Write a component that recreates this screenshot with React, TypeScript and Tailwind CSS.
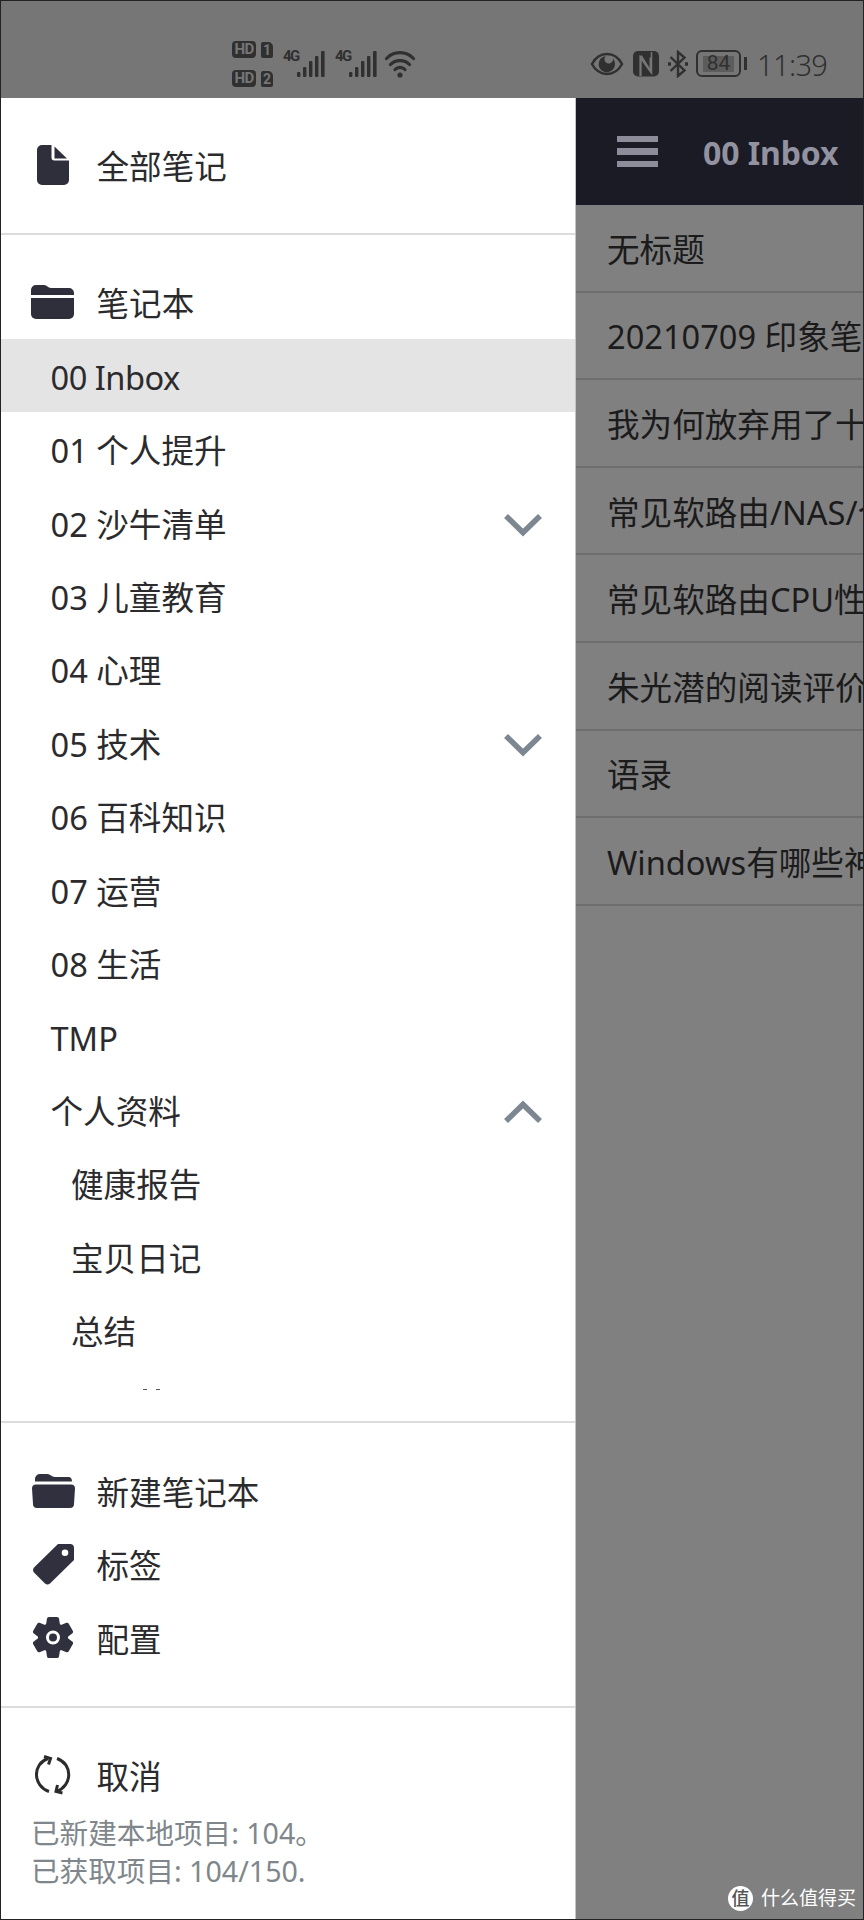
import React from "react";

type Notebook = { name: string; indent?: boolean; chevron?: "up" | "down"; active?: boolean };

const notebooks: Notebook[] = [
  { name: "00 Inbox", active: true },
  { name: "01 个人提升" },
  { name: "02 沙牛清单", chevron: "down" },
  { name: "03 儿童教育" },
  { name: "04 心理" },
  { name: "05 技术", chevron: "down" },
  { name: "06 百科知识" },
  { name: "07 运营" },
  { name: "08 生活" },
  { name: "TMP" },
  { name: "个人资料", chevron: "up" },
  { name: "健康报告", indent: true },
  { name: "宝贝日记", indent: true },
  { name: "总结", indent: true },
];

const notes = [
  "无标题",
  "20210709 印象笔记",
  "我为何放弃用了十年",
  "常见软路由/NAS/个人",
  "常见软路由CPU性能",
  "朱光潜的阅读评价",
  "语录",
  "Windows有哪些神器",
];

function Chevron({ up }: { up?: boolean }) {
  return (
    <svg width="38" height="24" viewBox="0 0 38 24" className={up ? "mr-[33px]" : "mr-[33px] rotate-180"}>
      <path d="M2 21 19 4.5 36 21" fill="none" stroke="#7d8791" strokeWidth="5.6" />
    </svg>
  );
}

function Signal() {
  return (
    <div className="flex h-[27px] w-[42px]">
      <span className="-mt-[2px] w-[14px] shrink-0 font-['Roboto',sans-serif] text-[15px] font-bold leading-[15px] tracking-[-1.6px]">4G</span>
      <svg className="shrink-0" width="28" height="27" viewBox="0 0 28 27" fill="currentColor">
        <rect x="0" y="21" width="3.4" height="5" rx="1" />
        <rect x="6" y="16" width="3.4" height="10" rx="1" />
        <rect x="12" y="10" width="3.4" height="16" rx="1" />
        <rect x="18" y="5" width="3.4" height="21" rx="1" />
        <rect x="24" y="0" width="3.6" height="26" rx="1" />
      </svg>
    </div>
  );
}

function HdBadge({ n }: { n: string }) {
  return (
    <div className="flex items-center gap-[5px] font-['Roboto',sans-serif] font-bold leading-none text-[#767676]">
      <span className="flex h-[17px] w-[24px] items-center justify-center rounded-[4px] bg-[#303030] text-[15px] tracking-[-0.7px]">HD</span>
      <span className="flex h-[16px] w-[12px] items-center justify-center rounded-[2px] rounded-tr-[5px] bg-[#303030] text-[14px]">{n}</span>
    </div>
  );
}

function StatusBar() {
  return (
    <header className="flex h-[97px] shrink-0 bg-[#767676] text-[#303030]">
      <div className="ml-[231px] mt-[40px] flex w-[41px] shrink-0 flex-col gap-[12px]">
        <HdBadge n="1" />
        <HdBadge n="2" />
      </div>
      <div className="ml-[10px] mt-[50px] flex shrink-0 gap-[10px]">
        <Signal />
        <Signal />
      </div>
      <svg className="ml-[7px] mt-[48px] shrink-0" width="32" height="30" viewBox="0 0 32 30" fill="none" stroke="currentColor" strokeWidth="3.2" strokeLinecap="round">
        <path d="M2.5 9.5C10 1.700 22 1.700 29.500 9.500" />
        <path d="M6.500 15.500c5-5.300 14-5.300 19 0" />
        <path d="M11 20.500c2.600-2.800 7.400-2.800 10 0" />
        <circle cx="16" cy="26" r="2.600" fill="currentColor" stroke="none" />
      </svg>
      <svg className="ml-[174px] mt-[51px] shrink-0" width="34" height="24" viewBox="0 0 34 24">
        <path d="M2 12C9-1.300 25-1.300 32 12 25 25.300 9 25.300 2 12Z" fill="none" stroke="currentColor" strokeWidth="2.500" />
        <path d="M16 4a8.200 8.200 0 1 0 9 8c0-2-.8-4-2-5.400a4.300 4.300 0 1 1-7-2.600Z" fill="currentColor" />
      </svg>
      <svg className="ml-[9px] mt-[50px] shrink-0" width="26" height="26" viewBox="0 0 26 26">
        <rect width="26" height="25.500" rx="5" fill="currentColor" />
        <path d="M7.500 25V6.500L17.500 20.500V6.500" fill="none" stroke="#767676" strokeWidth="2" />
        <path d="M9 1 19 17V1" fill="none" stroke="#767676" strokeWidth="0" />
        <path d="M8 4.500 18.500 21.500V1M7.500 5V25" fill="none" stroke="#767676" strokeWidth="1.500" />
      </svg>
      <svg className="ml-[8px] mt-[49px] shrink-0" width="22" height="28" viewBox="0 0 22 28" fill="none" stroke="currentColor" strokeWidth="2.400">
        <path d="M3.500 7 17.500 20.500 11 26V2l6.500 5.500L3.500 21" />
        <path d="M1 14h3M18 14h3" strokeWidth="3.400" />
      </svg>
      <div className="ml-[7px] mt-[49px] flex h-[27px] w-[45px] shrink-0 items-center justify-center rounded-[6px] border-[2.500px] border-[#303030]">
        <span className="flex h-[16px] w-[31px] items-center justify-center bg-[#5c5c5c] font-['Roboto',sans-serif] text-[21px] leading-none">84</span>
      </div>
      <div className="ml-[3px] mt-[56px] h-[13px] w-[3px] shrink-0 bg-[#303030]" />
      <span className="ml-[10px] mt-[43px] font-['Noto_Sans',sans-serif] text-[29px] font-light leading-[42px] tracking-[-0.6px]">11:39</span>
    </header>
  );
}

function FileIcon() {
  return (
    <svg width="32" height="40" viewBox="0 0 32 40" fill="#2e2f3b">
      <path d="M5 0h9.500v12.500a3 3 0 0 0 3 3H32V35a5 5 0 0 1-5 5H5a5 5 0 0 1-5-5V5a5 5 0 0 1 5-5Z" />
      <path d="M17.500 1.500 30 13.500H17.500Z" />
    </svg>
  );
}

function FolderIcon() {
  return (
    <svg className="mr-[2px]" width="43" height="34" viewBox="0 0 43 34" fill="#2e2f3b">
      <path d="M0 10V5a5 5 0 0 1 5-5h8c3 0 4 3 7 3h18a5 5 0 0 1 5 5v2Z" />
      <path d="M0 13h43v16a5 5 0 0 1-5 5H5a5 5 0 0 1-5-5Z" />
    </svg>
  );
}

function FolderOpenIcon() {
  return (
    <svg width="43" height="34" viewBox="0 0 43 34" fill="#30303f">
      <path d="M3 7.500V5a5 5 0 0 1 5-5h7c4 0 4 3 8 3h13c3 0 4 2 4 4.500Z" />
      <path d="M4 10.500h35a4 4 0 0 1 4 4L42 30a4 4 0 0 1-4 4H5a4 4 0 0 1-4-4L0 14.500a4 4 0 0 1 4-4Z" />
    </svg>
  );
}

function TagIcon() {
  return (
    <svg width="41" height="41" viewBox="0 0 41 41" fill="#30303f">
      <path fillRule="evenodd" d="M25 0h12a4 4 0 0 1 4 4v12L17 39.500a4 4 0 0 1-5 0L1 28.500a4 4 0 0 1 0-5Zm7 5.500a3.300 3.300 0 1 0 0 6.600 3.300 3.300 0 0 0 0-6.600Z" />
    </svg>
  );
}

function GearIcon() {
  return (
    <svg width="40" height="41" viewBox="0 0 40 41">
      <g fill="#30303f">
        <circle cx="20" cy="20.500" r="15" />
        {[0, 60, 120, 180, 240, 300].map((angle) => (
          <path key={angle} d="M14 1.500Q14.200 0 16 0h8q1.800 0 2 1.500L27 8H13Z" transform={`rotate(${angle} 20 20.500)`} />
        ))}
      </g>
      <circle cx="20" cy="20.500" r="5.500" fill="none" stroke="#fff" strokeWidth="3" />
    </svg>
  );
}

function SyncIcon() {
  return (
    <svg width="36" height="40" viewBox="0 0 36 40" fill="none" stroke="#2c2c2e" strokeWidth="3">
      <path d="M14 36.500C-2 31-3 9 13 3.500M22 3.500c16 5.500 15.500 27-.500 33" />
      <path d="M9 1.500 15.500 3.500 13.500 9.500M27.500 38 21 36.500 22.500 30" />
    </svg>
  );
}

function MenuRow({ icon, label }: { icon: React.ReactNode; label: string }) {
  return (
    <div className="flex h-[73.500px] items-center">
      <div className="flex w-[95.500px] shrink-0 items-center justify-center pl-[9px]">{icon}</div>
      <span className="pt-[4px]">{label}</span>
    </div>
  );
}

function Drawer() {
  return (
    <aside className="flex w-[575px] shrink-0 flex-col border-r border-[#c4c4c4] bg-white text-[#2b2b2d]">
      <section className="h-[137px] border-b-2 border-[#dcdcdc] pt-[30px]">
        <MenuRow icon={<FileIcon />} label="全部笔记" />
      </section>
      <section className="h-[1188px] border-b-2 border-[#dcdcdc] pt-[30px]">
        <MenuRow icon={<FolderIcon />} label="笔记本" />
        <div className="h-[1054px] overflow-hidden">
          {notebooks.map((item) => (
            <div
              key={item.name}
              className={`flex h-[73.430px] items-center justify-between pt-[5px] ${item.indent ? "pl-[70px]" : "pl-[49.500px]"} ${item.active ? "bg-[#e4e4e4] tracking-[-0.500px]" : ""}`}
            >
              <span>{item.name}</span>
              {item.chevron && <Chevron up={item.chevron === "up"} />}
            </div>
          ))}
          <div className="flex gap-[9px] pl-[142px] pt-[23px]">
            <span className="h-px w-[4px] bg-[#555]" />
            <span className="h-px w-[4px] bg-[#555]" />
          </div>
        </div>
      </section>
      <section className="h-[285px] border-b-2 border-[#dcdcdc] pt-[31px]">
        <MenuRow icon={<FolderOpenIcon />} label="新建笔记本" />
        <MenuRow icon={<TagIcon />} label="标签" />
        <MenuRow icon={<GearIcon />} label="配置" />
      </section>
      <section className="pt-[30px]">
        <MenuRow icon={<SyncIcon />} label="取消" />
        <div className="pl-[30px] pt-[2px] text-[28.600px] leading-[38px] text-[#7f878c]">
          <p>已新建本地项目: 104。</p>
          <p>已获取项目: 104/150.</p>
        </div>
      </section>
    </aside>
  );
}

export default function App() {
  return (
    <div className="relative flex h-[1920px] w-[864px] flex-col overflow-hidden border border-[#222224] bg-[#808080] font-['Noto_Sans','Noto_Sans_CJK_SC',sans-serif] text-[32.600px] leading-[48px]">
      <StatusBar />
      <div className="flex min-h-0 flex-1">
        <Drawer />
        <main className="min-w-0 flex-1 overflow-hidden whitespace-nowrap">
          <div className="flex h-[107px] items-center bg-[#1a1b24] text-[#9292a0]">
            <div className="ml-[41px] flex w-[41px] flex-col gap-[6px]">
              <i className="h-[6.500px] bg-[#8c8c9a]" />
              <i className="h-[6.500px] bg-[#8c8c9a]" />
              <i className="h-[6.500px] bg-[#8c8c9a]" />
            </div>
            <h1 className="ml-[45px] pt-[3px] text-[32px] font-bold tracking-[-0.1px]">00 Inbox</h1>
          </div>
          {notes.map((note) => (
            <div key={note} className="flex h-[87.600px] items-center border-b-2 border-[#6e6e70] pl-[31px] pt-[4px] text-[#1b1b1c]">
              {note}
            </div>
          ))}
        </main>
      </div>
      <div className="absolute bottom-[8px] right-[7px] flex items-center gap-[8px] text-[19px] leading-[26px] text-white">
        <span className="flex size-[25px] items-center justify-center rounded-full bg-white text-[18px] font-medium text-[#555]">值</span>
        <span>什么值得买</span>
      </div>
    </div>
  );
}
